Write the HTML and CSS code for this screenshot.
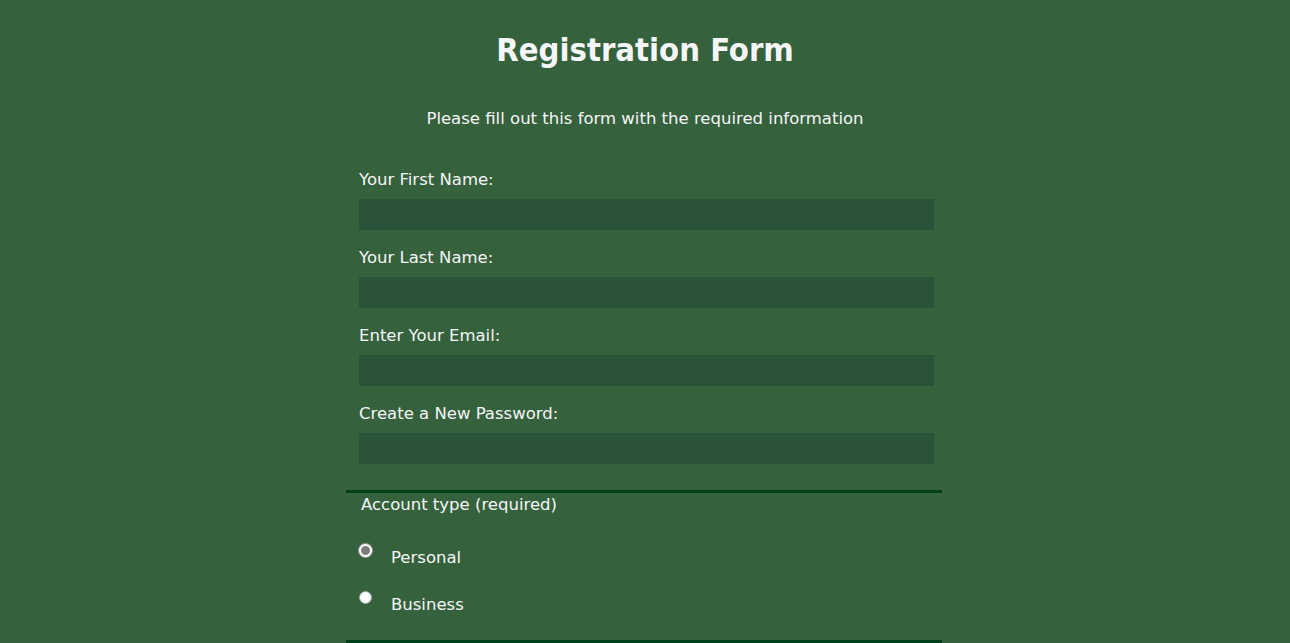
FILE: index.html
```html
<!DOCTYPE html>
<html lang="en">
<head>
<meta charset="utf-8">
<title>Registration Form</title>
<link rel="stylesheet" href="styles.css">
</head>
<body>
<h1 class="title">Registration Form</h1>
<p class="intro">Please fill out this form with the required information</p>
<form class="form">
  <fieldset class="group group-fields">
    <label class="field">Your First Name:<input class="text-input" type="text"></label>
    <label class="field">Your Last Name:<input class="text-input" type="text"></label>
    <label class="field">Enter Your Email:<input class="text-input" type="email"></label>
    <label class="field">Create a New Password:<input class="text-input" type="password"></label>
  </fieldset>
  <fieldset class="group group-choices">
    <legend class="legend">Account type (required)</legend>
    <label class="choice choice-first"><input class="radio radio-active" type="radio" name="account-type"><span class="choice-text">Personal</span></label>
    <label class="choice"><input class="radio" type="radio" name="account-type"><span class="choice-text">Business</span></label>
  </fieldset>
</form>
</body>
</html>
```

FILE: styles.css
```css
html, body {
  margin: 0;
  padding: 0;
}
body {
  background: #36613d;
  color: #f5f6f7;
  font-family: "DejaVu Sans", sans-serif;
  font-size: 16.5px;
  line-height: 20px;
}
.title {
  margin: 30px 0 0;
  font-family: "DejaVu Sans Condensed", "DejaVu Sans", sans-serif;
  font-size: 32.5px;
  line-height: 40px;
  font-weight: bold;
  text-align: center;
}
.intro {
  margin: 39px 0 0;
  text-align: center;
}
.form {
  width: 598px;
  margin: 40px auto 0;
}
.group {
  margin: 0 2px 0 0;
  padding: 0 8px 26px 13px;
  border: none;
  border-bottom: 3px solid #00401a;
  min-width: 0;
}
.group-choices {
  padding-bottom: 25px;
}
.field {
  display: block;
  margin-top: 17px;
  padding-top: 1px;
}
.field:first-child {
  margin-top: 0;
}
.text-input {
  display: block;
  box-sizing: border-box;
  width: 100%;
  height: 31px;
  margin: 9px 0 0;
  padding: 0 6px;
  border: none;
  background: #2b5339;
  color: #f5f6f7;
  font: inherit;
  outline: none;
}
.legend {
  padding: 2px 2px 0;
}
.choice {
  display: flex;
  align-items: flex-start;
  margin-top: 27px;
}
.choice-first {
  margin-top: 33px;
}
.radio {
  appearance: none;
  -webkit-appearance: none;
  box-sizing: border-box;
  width: 13px;
  height: 13px;
  margin: -4px 19px 0 0;
  border-radius: 50%;
  background: #ffffff;
  border: 1px solid #9aa89c;
  flex: none;
}
.radio-active {
  background: #7a7a7a;
  border: 2px solid #ffffff;
  box-shadow: 0 0 0 1px #9a9a9a;
}
```
